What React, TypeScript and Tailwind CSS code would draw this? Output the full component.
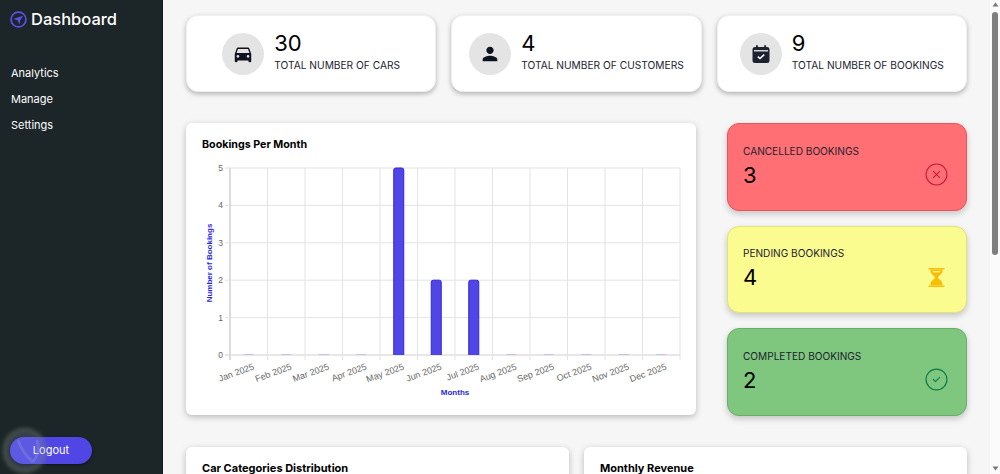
import React from 'react';
import { MdDirectionsCar, MdPerson } from 'react-icons/md';
import { CircleCheck, CircleX } from 'lucide-react';

const font = "font-['Inter','Liberation_Sans',sans-serif]";

const months = ['Jan', 'Feb', 'Mar', 'Apr', 'May', 'Jun', 'Jul', 'Aug', 'Sep', 'Oct', 'Nov', 'Dec'];
const bookings = [0, 0, 0, 0, 5, 2, 2, 0, 0, 0, 0, 0];

function Logo() {
  return (
    <svg width="17" height="17" viewBox="0 0 16 16" className="shrink-0">
      <circle cx="8" cy="8" r="7" fill="none" stroke="#5b50ef" strokeWidth="1.6" />
      <path d="M3 7.5 L12.5 4.5 L9.5 9 L9 13 L7.2 8.8 Z" fill="#5b50ef" />
    </svg>
  );
}

function CalendarIcon() {
  return (
    <svg width="20" height="20" viewBox="0 0 20 20">
      <rect x="1.5" y="3" width="17" height="16" rx="2.5" fill="#1c2230" />
      <rect x="3" y="6.2" width="14" height="1.2" fill="#fff" />
      <rect x="5" y="1" width="1.8" height="3.5" rx="0.8" fill="#1c2230" />
      <rect x="13.2" y="1" width="1.8" height="3.5" rx="0.8" fill="#1c2230" />
      <path d="M6.8 12.6 L9 14.6 L13.2 10.6" fill="none" stroke="#fff" strokeWidth="1.5" />
    </svg>
  );
}

function HourglassIcon() {
  return (
    <svg width="17" height="19" viewBox="0 0 17 19" fill="#fbbc04">
      <rect x="0.5" y="0" width="16" height="1.4" />
      <rect x="0.5" y="17.6" width="16" height="1.4" />
      <path d="M2.5 1.4 H14.5 V3 C14.5 6 10.5 8 9.8 9.5 C10.5 11 14.5 13 14.5 16 V17.6 H2.5 V16 C2.5 13 6.5 11 7.2 9.5 C6.5 8 2.5 6 2.5 3 Z" />
      <path d="M4.5 3 H12.5 C12.5 4 11 4.6 11 4.6 H6 C6 4.6 4.5 4 4.5 3 Z" fill="#fdf38e" />
    </svg>
  );
}

function BarChart() {
  const left = 44;
  const step = 37.5;
  const top = 45;
  const rowH = 37.4;
  const bottom = top + rowH * 5;
  return (
    <svg width="510" height="292" viewBox="0 0 510 292" className="absolute left-0 top-0">
      {[0, 1, 2, 3, 4, 5].map((v) => (
        <g key={v}>
          <line x1={left - 5} x2={left + step * 12} y1={bottom - v * rowH} y2={bottom - v * rowH} stroke={v === 0 ? '#cfcfcf' : '#e3e3e3'} />
          <text x={left - 7} y={bottom - v * rowH + 3} textAnchor="end" fontSize="8.5" fill="#666" fontFamily="Liberation Sans">{v}</text>
        </g>
      ))}
      {Array.from({ length: 13 }).map((_, i) => (
        <line key={i} x1={left + i * step} x2={left + i * step} y1={top} y2={bottom + 5} stroke={i === 0 ? '#dcdcdc' : '#e3e3e3'} strokeWidth={i === 0 ? 2 : 1} />
      ))}
      {bookings.map((v, i) => {
        const cx = left + step * (i + 0.5);
        if (v === 0) return <line key={i} x1={cx - 5} x2={cx + 5} y1={bottom - 0.5} y2={bottom - 0.5} stroke="#c5c2ee" />;
        const h = v * rowH;
        return (
          <path
            key={i}
            d={`M${cx - 5} ${bottom} V${bottom - h + 2} Q${cx - 5} ${bottom - h} ${cx - 3} ${bottom - h} H${cx + 3} Q${cx + 5} ${bottom - h} ${cx + 5} ${bottom - h + 2} V${bottom}`}
            fill="#5046e6"
            stroke="#2f24e2"
          />
        );
      })}
      {months.map((m, i) => {
        const x = left + step * (i + 0.5) + 6;
        const y = bottom + 14;
        return (
          <text key={m} x={x} y={y} textAnchor="end" fontSize="9" fill="#666" fontFamily="Liberation Sans" transform={`rotate(-20 ${x} ${y})`}>
            {m} 2025
          </text>
        );
      })}
      <text x="269" y="272" textAnchor="middle" fontSize="8" fontWeight="700" fill="#2a1fe8" fontFamily="Liberation Sans">Months</text>
      <text x="26" y="140" textAnchor="middle" fontSize="8" fontWeight="700" fill="#2a1fe8" fontFamily="Liberation Sans" transform="rotate(-90 26 140)">Number of Bookings</text>
    </svg>
  );
}

function StatCard({ icon, value, label }: { icon: React.ReactNode; value: string; label: string }) {
  return (
    <div className="flex h-[77px] items-center justify-center gap-2.5 rounded-xl border border-[#f0f0f0] bg-white shadow-[0_2px_5px_rgba(0,0,0,0.28)]">
      <div className="flex h-[42px] w-[42px] items-center justify-center rounded-full bg-[#e4e4e4]">{icon}</div>
      <div className="pb-[5px]">
        <div className="text-[22px] leading-[25px] text-black">{value}</div>
        <div className="mt-[2px] text-[10.2px] leading-[14px] text-[#1c2230]">{label}</div>
      </div>
    </div>
  );
}

function StatusCard({ bg, border, label, value, icon }: { bg: string; border: string; label: string; value: string; icon: React.ReactNode }) {
  return (
    <div className={`flex h-[87.5px] items-center justify-between rounded-xl border pl-[15px] pr-[19px] shadow-[0_3px_6px_rgba(0,0,0,0.2)] ${bg} ${border}`}>
      <div className="pb-[2px]">
        <div className="text-[10.1px] leading-[14px] text-[#1c2230]">{label}</div>
        <div className="mt-[5px] text-[22px] leading-[25px] text-black">{value}</div>
      </div>
      <div className="mt-[16px] flex w-[22px] items-center justify-center">{icon}</div>
    </div>
  );
}

export default function App() {
  return (
    <div className={`${font} flex h-screen overflow-hidden bg-[#f6f6f6]`}>
      <aside className="flex w-[163px] shrink-0 flex-col justify-between border-r border-[#14191a] bg-[#1c2527] px-2.5 pb-2.5 text-white">
        <div>
          <div className="flex h-[39px] items-center gap-1 text-[16.5px] font-medium">
            <Logo />
            <span>Dashboard</span>
          </div>
          <nav className="mt-[25px] flex flex-col gap-[7px] pl-px text-[11px] leading-[19px]">
            <a>Analytics</a>
            <a>Manage</a>
            <a>Settings</a>
          </nav>
        </div>
        <button className="relative h-[27px] w-[82px] rounded-full bg-[#4f46e5] text-[11px] text-white shadow-[0_1px_3px_rgba(0,0,0,0.5)]">
          Logout
          {/* click ripple caught in the screenshot */}
          <span className="absolute left-[-7px] top-[-9px] h-[45px] w-[43px] rounded-full border-[3px] border-[#6f8355]/40 bg-[#9aa6d8]/20 blur-[2px]" />
          <svg width="30" height="28" viewBox="0 0 30 28" className="absolute left-[3px] top-0" fill="none">
            <path d="M5 3 C8 12 14 20 20 25" stroke="#8d92d8" strokeWidth="3" opacity="0.35" />
            <path d="M24 3 C26 10 26 18 20 25" stroke="#8d92d8" strokeWidth="3" opacity="0.35" />
          </svg>
        </button>
      </aside>

      <main className="min-w-0 flex-1 px-[23px] pt-[15px]">
        <div className="grid grid-cols-3 gap-[15px]">
          <StatCard icon={<MdDirectionsCar size={22} color="#0d1420" />} value="30" label="TOTAL NUMBER OF CARS" />
          <StatCard icon={<MdPerson size={22} color="#0d1420" />} value="4" label="TOTAL NUMBER OF CUSTOMERS" />
          <StatCard icon={<CalendarIcon />} value="9" label="TOTAL NUMBER OF BOOKINGS" />
        </div>

        <div className="mt-[31px] flex gap-[31px]">
          <section className="relative h-[292px] w-[510px] shrink-0 rounded-md bg-white shadow-[0_2px_6px_rgba(0,0,0,0.25)]">
            <h3 className="pl-4 pt-[14px] text-[10.7px] font-bold leading-[16px] text-black">Bookings Per Month</h3>
            <BarChart />
          </section>
          <div className="flex flex-1 flex-col gap-[15px]">
            <StatusCard bg="bg-[#ff6f74]" border="border-[#ea5357]" label="CANCELLED BOOKINGS" value="3" icon={<CircleX size={25} strokeWidth={1} color="#c9183a" className="shrink-0" />} />
            <StatusCard bg="bg-[#fbfc90]" border="border-[#e4e278]" label="PENDING BOOKINGS" value="4" icon={<HourglassIcon />} />
            <StatusCard bg="bg-[#7fc77e]" border="border-[#6cac6b]" label="COMPLETED BOOKINGS" value="2" icon={<CircleCheck size={25} strokeWidth={1.1} color="#0b7a4b" className="shrink-0" />} />
          </div>
        </div>

        <div className="mt-[31px] grid grid-cols-2 gap-[15px]">
          <section className="h-[200px] rounded-md bg-white px-4 pt-[13px] text-[11px] font-bold leading-[16px] text-black shadow-[0_2px_6px_rgba(0,0,0,0.25)]">Car Categories Distribution</section>
          <section className="h-[200px] rounded-md bg-white px-4 pt-[13px] text-[11px] font-bold leading-[16px] text-black shadow-[0_2px_6px_rgba(0,0,0,0.25)]">Monthly Revenue</section>
        </div>
      </main>

      <div className="flex w-2.5 shrink-0 flex-col items-center bg-[#fbfbfb] pt-[2px]">
        <svg width="7" height="5" viewBox="0 0 7 5"><path d="M3.5 0.5 L6.5 4.5 H0.5 Z" fill="#777" /></svg>
        <div className="mt-[5px] h-[243px] w-[6px] rounded-full bg-[#7f7f7f]" />
        <div className="flex-1" />
        <svg width="7" height="5" viewBox="0 0 7 5" className="mb-[3px]"><path d="M3.5 4.5 L6.5 0.5 H0.5 Z" fill="#777" /></svg>
      </div>
    </div>
  );
}
